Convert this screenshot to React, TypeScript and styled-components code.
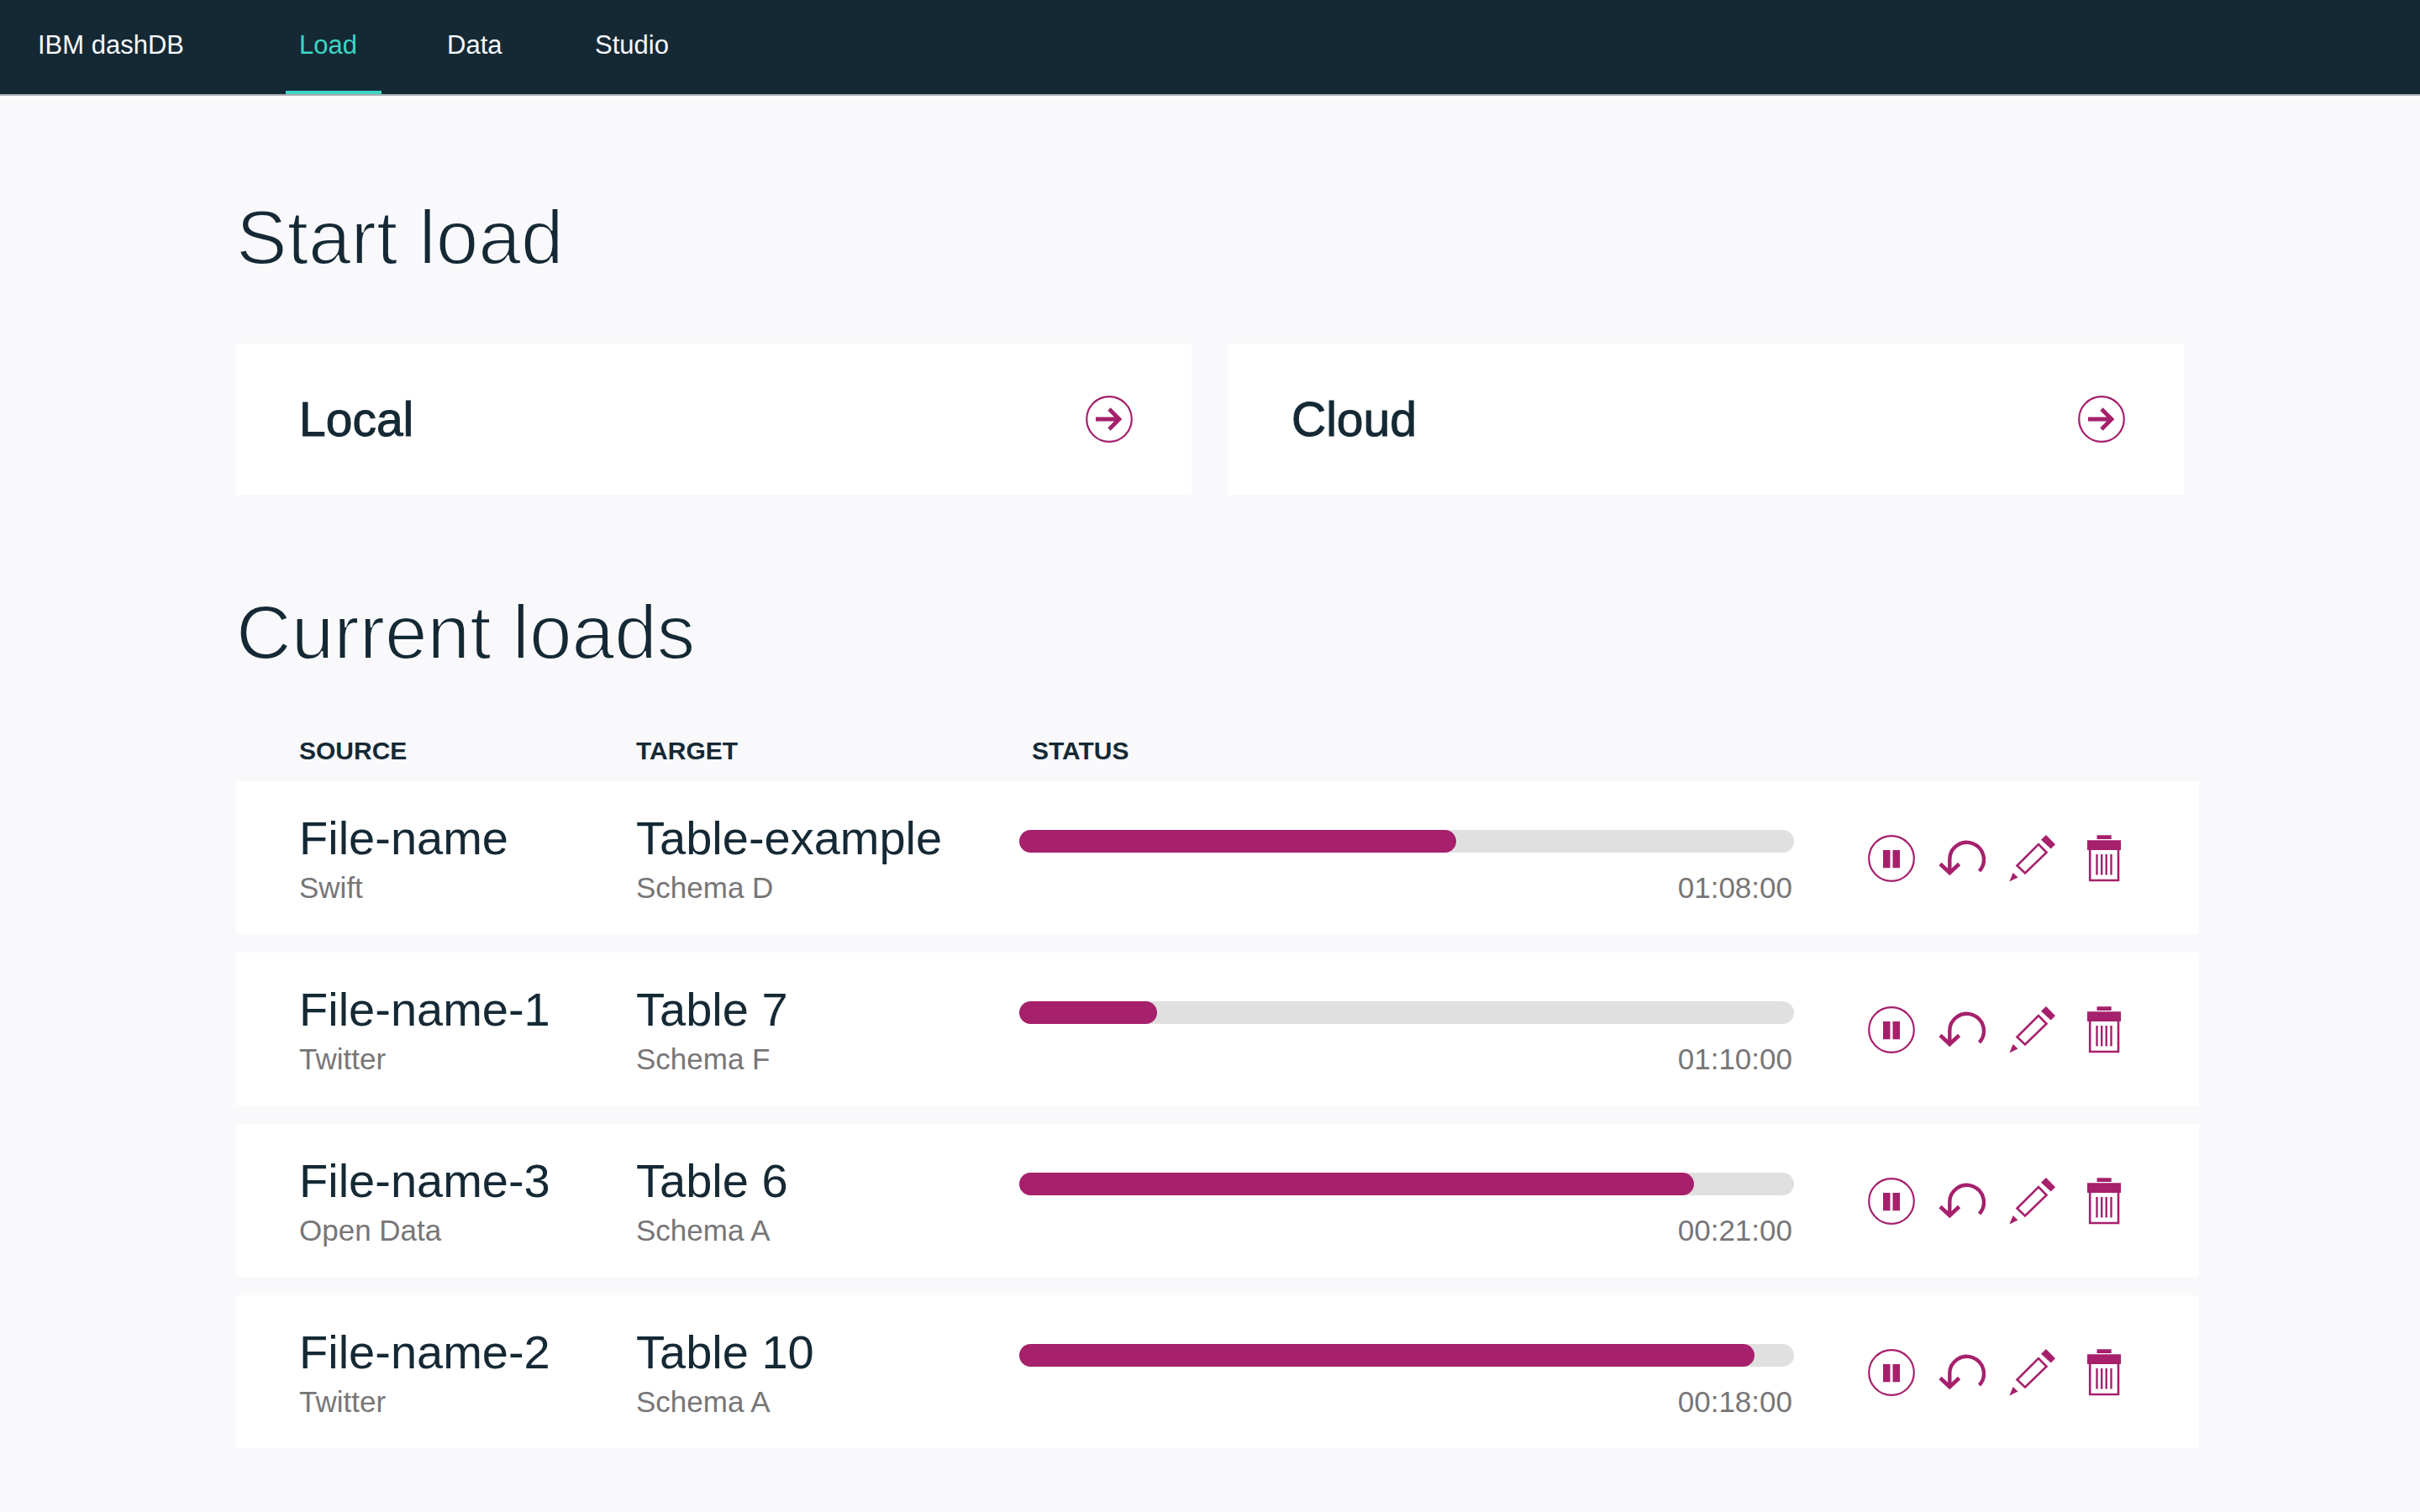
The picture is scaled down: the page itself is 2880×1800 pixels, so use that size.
import React from "react";
import styled, { createGlobalStyle } from "styled-components";

const ink = "#152935";
const page = "#f9f9fb";
const accent = "#a6206c";
const teal = "#3dd6c4";

const GlobalStyle = createGlobalStyle`
  * {
    box-sizing: border-box;
  }
  body {
    margin: 0;
    background: ${page};
    color: ${ink};
    font-family: "Liberation Sans", Arial, Helvetica, sans-serif;
  }
`;

const Header = styled.header`
  display: flex;
  height: 114px;
  padding-left: 45px;
  background: ${ink};
  border-bottom: 2px solid #a9adb4;
`;

const Brand = styled.a`
  width: 295px;
  color: #f9f9fb;
  font-size: 31px;
  line-height: 108px;
  text-decoration: none;
`;

const Nav = styled.nav`
  display: flex;
  gap: 62px;
`;

const NavLink = styled.a<{ $active?: boolean }>`
  min-width: 114px;
  padding: 0 16px;
  border-bottom: 4px solid ${(p) => (p.$active ? teal : "transparent")};
  color: ${(p) => (p.$active ? teal : "#f9f9fb")};
  font-size: 31px;
  line-height: 108px;
  text-decoration: none;
`;

const Main = styled.main`
  display: flex;
  flex-direction: column;
  gap: 114px;
  padding: 119px 263px 76px 281px;
`;

const Heading = styled.h2`
  margin: 0 0 76px;
  font-size: 91px;
  font-weight: 400;
  line-height: 100px;
  -webkit-text-stroke: 2px ${page};
`;

const Options = styled.div`
  display: grid;
  grid-template-columns: 1fr 1fr;
  gap: 44px;
  padding-right: 18px;
`;

const OptionCard = styled.button`
  display: flex;
  align-items: center;
  justify-content: space-between;
  padding: 58px 70px 58px 75px;
  border: 0;
  background: #fff;
  color: ${ink};
  font-family: inherit;
  font-size: 57px;
  line-height: 64px;
  -webkit-text-stroke: 1px ${ink};
  cursor: pointer;
`;

const Icon = styled.svg`
  display: block;
  width: 56px;
  height: 56px;
  fill: none;
  stroke: ${accent};
  stroke-width: 2.2;
`;

const Table = styled.table`
  display: block;
`;

const TableHead = styled.thead`
  display: block;
`;

const TableBody = styled.tbody`
  display: flex;
  flex-direction: column;
  gap: 22px;
`;

const rowColumns = `
  display: grid;
  grid-template-columns: 401px 456px 1fr auto;
  padding-left: 75px;
  padding-right: 86px;
`;

const HeadRow = styled.tr`
  ${rowColumns}
  padding-bottom: 21px;
`;

const HeadCell = styled.th<{ $inset?: boolean }>`
  padding: 0 0 0 ${(p) => (p.$inset ? 15 : 0)}px;
  font-size: 30px;
  font-weight: 700;
  line-height: 30px;
  text-align: left;
`;

const LoadRow = styled.tr`
  ${rowColumns}
  padding-top: 36px;
  padding-bottom: 35px;
  background: #fff;
`;

const Cell = styled.td`
  padding: 0;
`;

const Name = styled.div`
  font-size: 56px;
  line-height: 64px;
`;

const Detail = styled.div`
  margin-top: 7px;
  color: #777677;
  font-size: 35px;
  line-height: 40px;
`;

const Track = styled.div`
  height: 27px;
  margin: 22px 0;
  border-radius: 14px;
  background: #e0e0e0;
`;

const Fill = styled.div`
  height: 100%;
  border-radius: 14px;
  background: ${accent};
`;

const Time = styled.div`
  padding-right: 2px;
  color: #777677;
  font-size: 35px;
  line-height: 40px;
  text-align: right;
`;

const Actions = styled.td`
  display: flex;
  align-items: center;
  gap: 28px;
  padding: 0 0 0 88px;
`;

const IconButton = styled.button`
  padding: 0;
  border: 0;
  background: none;
  cursor: pointer;
`;

const ArrowIcon = () => (
  <Icon viewBox="0 0 56 56" aria-hidden="true">
    <circle cx="28" cy="28" r="26.8" />
    <path d="M12 28H40M28 16L40 28L28 40" strokeWidth="4.8" />
  </Icon>
);

const PauseIcon = () => (
  <Icon viewBox="0 0 56 56" aria-hidden="true">
    <circle cx="28" cy="28" r="26.8" />
    <path d="M18 18h8.500v21.300h-8.500zM29.500 18h8.500v21.300h-8.500z" fill={accent} stroke="none" />
  </Icon>
);

const UndoIcon = () => (
  <Icon viewBox="0 0 56 56" aria-hidden="true">
    <path d="M13.300 45V29.500A20.300 20.300 0 1 1 48.500 43" strokeWidth="4.400" />
    <path d="M2 34.500L13.300 45L24.600 34.500" strokeWidth="4.600" />
  </Icon>
);

const EditIcon = () => (
  <Icon viewBox="0 0 56 56" aria-hidden="true">
    <path d="M35 11.200L44.500 20.800L19 45.500L9.500 36.500Z" strokeWidth="2.600" />
    <path d="M44 0L55 11.300L49.700 16.500L38 5.700ZM4.700 45L10.500 50.500L0.300 55.500Z" fill={accent} stroke="none" />
  </Icon>
);

const TrashIcon = () => (
  <Icon viewBox="0 0 56 56" aria-hidden="true">
    <path d="M20.500 0.300h17.200v4.700h-17.200zM9 6.200h40v11.800h-40z" fill={accent} stroke="none" />
    <path d="M12.200 17V54H46V17" strokeWidth="2.600" />
    <path d="M20.500 23V47.500M26.200 23V47.500M31.700 23V47.500M37.500 23V47.500" strokeWidth="2.400" />
  </Icon>
);

const loads = [
  { source: "File-name", origin: "Swift", target: "Table-example", schema: "Schema D", progress: 56.4, time: "01:08:00" },
  { source: "File-name-1", origin: "Twitter", target: "Table 7", schema: "Schema F", progress: 17.8, time: "01:10:00" },
  { source: "File-name-3", origin: "Open Data", target: "Table 6", schema: "Schema A", progress: 87.1, time: "00:21:00" },
  { source: "File-name-2", origin: "Twitter", target: "Table 10", schema: "Schema A", progress: 94.9, time: "00:18:00" },
];

const actions = [
  { label: "Pause", Glyph: PauseIcon },
  { label: "Restart", Glyph: UndoIcon },
  { label: "Edit", Glyph: EditIcon },
  { label: "Delete", Glyph: TrashIcon },
];

export default function App() {
  return (
    <>
      <GlobalStyle />
      <Header>
        <Brand href="#">IBM dashDB</Brand>
        <Nav>
          <NavLink href="#load" $active aria-current="page">Load</NavLink>
          <NavLink href="#data">Data</NavLink>
          <NavLink href="#studio">Studio</NavLink>
        </Nav>
      </Header>
      <Main>
        <section>
          <Heading>Start load</Heading>
          <Options>
            <OptionCard type="button">Local<ArrowIcon /></OptionCard>
            <OptionCard type="button">Cloud<ArrowIcon /></OptionCard>
          </Options>
        </section>
        <section>
          <Heading>Current loads</Heading>
          <Table>
            <TableHead>
              <HeadRow>
                <HeadCell scope="col">SOURCE</HeadCell>
                <HeadCell scope="col">TARGET</HeadCell>
                <HeadCell scope="col" $inset>STATUS</HeadCell>
              </HeadRow>
            </TableHead>
            <TableBody>
              {loads.map((load) => (
                <LoadRow key={load.source}>
                  <Cell>
                    <Name>{load.source}</Name>
                    <Detail>{load.origin}</Detail>
                  </Cell>
                  <Cell>
                    <Name>{load.target}</Name>
                    <Detail>{load.schema}</Detail>
                  </Cell>
                  <Cell>
                    <Track
                      role="progressbar"
                      aria-label={load.source}
                      aria-valuenow={Math.round(load.progress)}
                      aria-valuemin={0}
                      aria-valuemax={100}
                    >
                      <Fill style={{ width: `${load.progress}%` }} />
                    </Track>
                    <Time>{load.time}</Time>
                  </Cell>
                  <Actions>
                    {actions.map(({ label, Glyph }) => (
                      <IconButton key={label} type="button" aria-label={`${label} ${load.source}`}>
                        <Glyph />
                      </IconButton>
                    ))}
                  </Actions>
                </LoadRow>
              ))}
            </TableBody>
          </Table>
        </section>
      </Main>
    </>
  );
}
